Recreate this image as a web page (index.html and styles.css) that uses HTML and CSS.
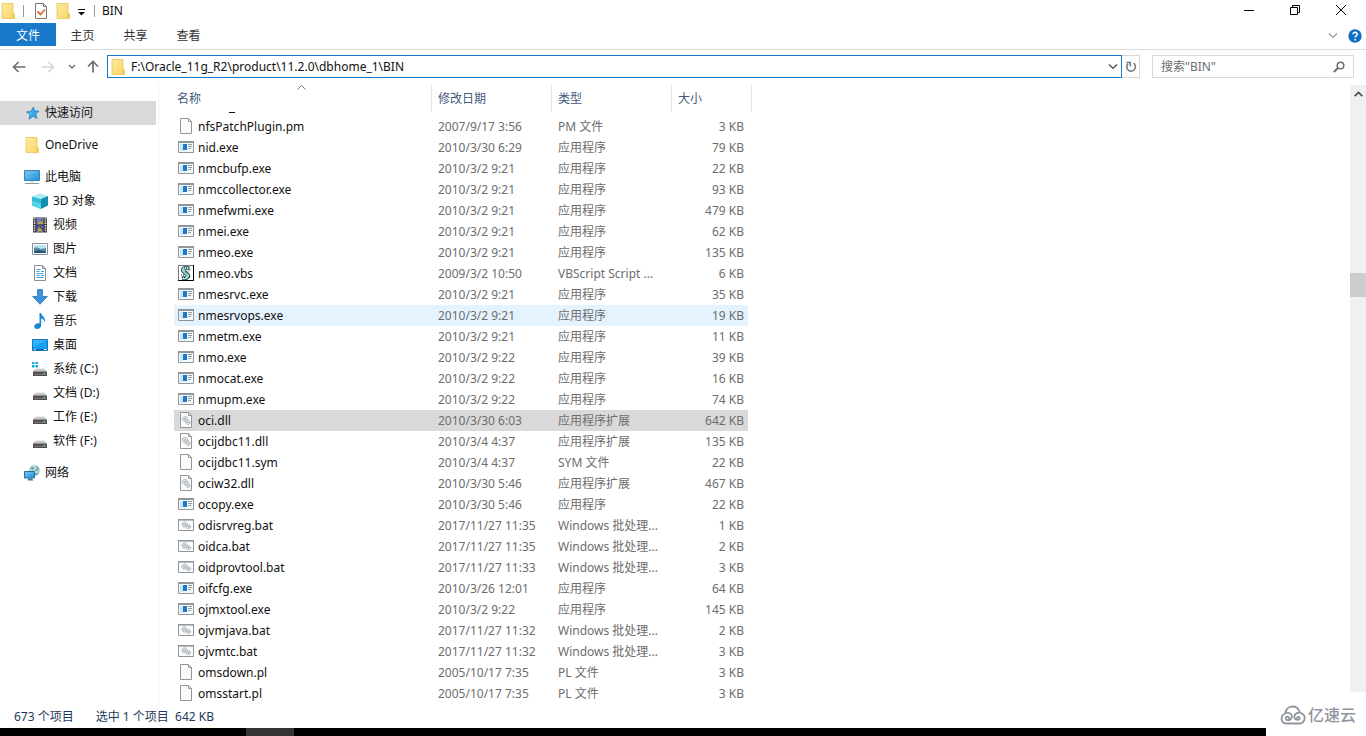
FILE: index.html
```html
<!DOCTYPE html>
<html lang="zh-CN">
<head>
<meta charset="utf-8">
<title>BIN</title>
<link rel="stylesheet" href="styles.css">
</head>
<body>
<svg class="defs" aria-hidden="true">
  <defs>
    <linearGradient id="gold" x1="0" y1="0" x2="1" y2="1"><stop offset="0" stop-color="#ffeb9c"/><stop offset="1" stop-color="#f8d568"/></linearGradient>
    <linearGradient id="screen" x1="0" y1="0" x2="1" y2="1"><stop offset="0" stop-color="#7cc8f2"/><stop offset="1" stop-color="#1f8fdc"/></linearGradient>
    <linearGradient id="drv" x1="0" y1="0" x2="0" y2="1"><stop offset="0" stop-color="#dcdcdc"/><stop offset="1" stop-color="#b4b4b4"/></linearGradient>
  </defs>
  <symbol id="folder" viewBox="0 0 16 16"><path d="M2 .5h11v9.500l1.500 1v4.500H2z" fill="url(#gold)" stroke="#e6c25c" stroke-width=".8"/><path d="M12 10v5.500h2.500V11l-1.500-.5V10z" fill="#f0cc5e"/></symbol>
  <symbol id="file" viewBox="0 0 16 16"><path d="M2.500.5h8l3 3v12h-11z" fill="#fbfbfb" stroke="#969696"/><path d="M10.500.5v3h3" fill="none" stroke="#969696"/></symbol>
  <symbol id="exe" viewBox="0 0 16 16"><path d="M.5 2.500h15v11H.5z" fill="#f4f9fc" stroke="#8f979c"/><path d="M0 2h16v2H0z" fill="#8f979c"/><path d="M2 5h3v7H2z" fill="#cfe5f3"/><path d="M5 5h4v6H5z" fill="#1979ca"/><path d="M10 5.500h4M10 7.500h4M10 9.500h3" stroke="#929ca3"/></symbol>
  <symbol id="dll" viewBox="0 0 16 16"><path d="M2.500.5h8l3 3v12h-11z" fill="#fbfbfb" stroke="#969696"/><path d="M10.500.5v3h3" fill="none" stroke="#969696"/><g fill="#eef3f6" stroke="#8e99a1" stroke-width=".9"><circle cx="7" cy="7" r="2.600" stroke-dasharray="1.500 .4"/><circle cx="10" cy="10.500" r="2" stroke-dasharray="1.300 .4"/><circle cx="7" cy="7" r="1" stroke-width=".7"/><circle cx="10" cy="10.500" r=".6" stroke-width=".6"/></g></symbol>
  <symbol id="bat" viewBox="0 0 16 16"><path d="M.5 2.500h15v11H.5z" fill="#fafcfd" stroke="#8f979c"/><path d="M0 2h16v1.600H0z" fill="#8f979c"/><g fill="#eaf1f5" stroke="#8795a0" stroke-width=".8"><circle cx="6.500" cy="7.500" r="2.600" stroke-dasharray="1.500 .4"/><circle cx="10.500" cy="9.700" r="2" stroke-dasharray="1.300 .4"/><circle cx="6.500" cy="7.500" r="1"/><circle cx="10.500" cy="9.700" r=".6"/></g></symbol>
  <symbol id="vbs" viewBox="0 0 16 16"><path d="M.5.5h15v15H.5z" fill="#fff" stroke="#777"/><path d="M0 15.500h15.500V0" fill="none" stroke="#000"/><path d="M11.500 3H7.500C5 3 4.500 5 6 6.500l3 2.500c1.500 1.500.5 3.500-1 4H4" fill="none" stroke="#111" stroke-width="4.200"/><path d="M11.500 3H7.500C5 3 4.500 5 6 6.500l3 2.500c1.500 1.500.5 3.500-1 4H4" fill="none" stroke="#8fded8" stroke-width="2.800"/><path d="M6 3h5M7 6.500l3 2.500M4 12.500h4M10.500 6l2-1.500M11 12.500l2-1M3 10h3" stroke="#123" stroke-dasharray="1 1"/></symbol>
  <symbol id="star" viewBox="0 0 16 16"><path d="M9.300 2l1.300 3.900 4.400.1-3.300 3 1.300 4.500L9 11.300l-4 2.900 1-4.700L2.500 7l4.600-.6z" fill="#3aa5e8" stroke="#2583c2" stroke-width=".8"/><path d="M9 3.800L8.200 7.500l-4 .2 3 2z" fill="#79c8f4"/></symbol>
  <symbol id="pc" viewBox="0 0 16 16"><path d="M.5 1.500h15v10H.5z" fill="url(#screen)" stroke="#3b82ad"/><path d="M6 12h4v1.500H6z" fill="#cfdde5"/><path d="M1 14.500h14" stroke="#8799a4"/></symbol>
  <symbol id="cube" viewBox="0 0 16 16"><path d="M0 3.500L8 .5l8 2.500-7 3z" fill="#a6ecf2"/><path d="M0 3.500L9 6v10L0 12.500z" fill="#31bfd8"/><path d="M9 6l7-3v9.500L9 16z" fill="#128cb0"/><path d="M0 8l9 2.500V16L0 12.500z" fill="#58d5e5"/></symbol>
  <symbol id="film" viewBox="0 0 16 16"><path d="M1 .5h14v15H1z" fill="#393939"/><path d="M2.500 1v14M13.500 1v14" stroke="#f0f0f0" stroke-width="1.500" stroke-dasharray="1.300 1"/><path d="M4.500 1h7v6.500h-7z" fill="#7376c5"/><path d="M4.500 8.500h7V15h-7z" fill="#5558a7"/><path d="M5 7l4-4 2 1v3zM5 14.500l2-4 3-1v5z" fill="#b1a84c"/><path d="M9 3l1 1.500M8 10l2 2" stroke="#222"/></symbol>
  <symbol id="photo" viewBox="0 0 16 16"><path d="M.5 2.500h15v11H.5z" fill="#fff" stroke="#899299"/><path d="M2 4h12v8H2z" fill="#bde0f3"/><path d="M2 7c3-1 5 0 7 1l5-1v5H2z" fill="#598ba4"/><path d="M2 10.500l4-1.500 8 1.500V12H2z" fill="#265876"/></symbol>
  <symbol id="doc" viewBox="0 0 16 16"><path d="M2.500.5h8l3 3v12h-11z" fill="#fff" stroke="#83919b"/><path d="M10.500.5v3h3" fill="none" stroke="#83919b"/><path d="M4.500 4.500h4M4.500 6.500h3M9 6.500h3M4.500 8.500h7M4.500 10.500h3M9 10.500h3M4.500 12.500h7" stroke="#42a0d4"/></symbol>
  <symbol id="down" viewBox="0 0 16 16"><path d="M5.500.5h5v7h4.800L8 15.300.7 7.500h4.800z" fill="#3c94dc" stroke="#2673b8" stroke-width=".8"/></symbol>
  <symbol id="note" viewBox="0 0 16 16"><path d="M7.500 0h1.700c.3 3.500 4.800 4 3.800 9.500-.7-2.500-2-3.500-3.800-4V12c0 2.500-2 4-4 4S2 14.800 2.200 13.200c.2-2 2.800-3.500 5.300-2.900z" fill="#1588d4"/></symbol>
  <symbol id="desk" viewBox="0 0 16 16"><path d="M.5 2.500h15v11H.5z" fill="#13a0f5" stroke="#1679bd"/><path d="M1 12.500h14" stroke="#0a5da0"/><path d="M2 12.500h1.500M12 12.500h2.500" stroke="#fff"/><path d="M1 3h14L1 10z" fill="#35b0fa"/></symbol>
  <symbol id="drive" viewBox="0 0 16 16"><path d="M3.500 7.500h9l2.500 3H1z" fill="url(#drv)"/><path d="M1 10.500h14V15H1z" fill="#515151"/><path d="M2 13.500h11" stroke="#777"/><path d="M11.500 12h2v1h-2z" fill="#4eff58"/></symbol>
  <symbol id="sysdrive" viewBox="0 0 16 16"><use href="#drive"/><path d="M0 1h2.500v2H0zM3.500 1H6v2H3.500zM0 4h2.500v2.500H0zM3.500 4H6v2.500H3.500z" fill="#18a8d8"/></symbol>
  <symbol id="net" viewBox="0 0 16 16"><circle cx="10.500" cy="5.500" r="5.200" fill="#78acc3"/><path d="M8 1c3 0 5 2 3 3s-1 2 1 3 3-1 3.500-2M6 4l3 3" fill="none" stroke="#c7e5cb" stroke-width="1.500"/><path d="M.5 6.500h10v6.500H.5z" fill="url(#screen)" stroke="#23729f"/><path d="M4 13.500h4l1.500 2h-6z" fill="#437d9b"/></symbol>
</svg>

<div class="window">
  <header class="titlebar">
    <svg class="icon"><use href="#folder"/></svg>
    <span class="rule"></span>
    <button class="quick" aria-label="属性"><svg class="icon" viewBox="0 0 16 16"><path d="M2.500.5h8l3 3v12h-11z" fill="#fff" stroke="#777"/><path d="M10.500.5v3h3" fill="none" stroke="#777"/><path d="M4.500 8.500l3 3 4.500-5" fill="none" stroke="#dd6a3c" stroke-width="1.800"/></svg></button>
    <button class="quick" aria-label="新建文件夹"><svg class="icon"><use href="#folder"/></svg></button>
    <button class="quick caret" aria-label="自定义快速访问工具栏"><svg width="7" height="7" viewBox="0 0 7 7"><path d="M0 .5h7" stroke="#111"/><path d="M0 3h7L3.500 6.500z" fill="#111"/></svg></button>
    <span class="rule"></span>
    <h1 class="title">BIN</h1>
    <div class="controls">
      <button aria-label="最小化"><svg width="12" height="12" viewBox="0 0 12 12"><path d="M1 6.500h10" stroke="#000"/></svg></button>
      <button aria-label="还原"><svg width="12" height="12" viewBox="0 0 12 12"><path d="M1.500 3.500h7v7h-7zM3.500 3.500v-2h7v7h-2" fill="none" stroke="#000"/></svg></button>
      <button aria-label="关闭"><svg width="12" height="12" viewBox="0 0 12 12"><path d="M1 1l10 10M11 1L1 11" stroke="#000"/></svg></button>
    </div>
  </header>

  <nav class="tabs">
    <button class="tab active">文件</button>
    <button class="tab">主页</button>
    <button class="tab">共享</button>
    <button class="tab">查看</button>
    <div class="tabtools">
      <button aria-label="展开功能区"><svg width="10" height="6" viewBox="0 0 10 6"><path d="M1 .5l4 4 4-4" fill="none" stroke="#999" stroke-width="1.200"/></svg></button>
      <button aria-label="帮助"><svg width="14" height="14" viewBox="0 0 14 14"><circle cx="7" cy="7" r="6.700" fill="#0f6fc6"/><path d="M5 5.300c0-2.800 4.300-2.500 4.200 0C9.200 6.800 7.200 7 7.200 8.500M7.200 10v1.600" fill="none" stroke="#fff" stroke-width="1.600"/></svg></button>
    </div>
  </nav>

  <div class="navrow">
    <div class="navbtns">
      <button aria-label="后退"><svg width="14" height="12" viewBox="0 0 14 12"><path d="M13.500 6H1.500M6.500 1l-5 5 5 5" fill="none" stroke="#6e6e6e" stroke-width="1.600"/></svg></button>
      <button aria-label="前进"><svg width="14" height="12" viewBox="0 0 14 12"><path d="M.5 6h12M7.500 1l5 5-5 5" fill="none" stroke="#d4d4d4" stroke-width="1.600"/></svg></button>
      <button aria-label="最近浏览的位置"><svg width="8" height="6" viewBox="0 0 8 6"><path d="M1 1l3 3 3-3" fill="none" stroke="#777" stroke-width="1.500"/></svg></button>
      <button aria-label="上移"><svg width="12" height="13" viewBox="0 0 12 13"><path d="M6 12.500V1.500M1 6.500l5-5 5 5" fill="none" stroke="#6e6e6e" stroke-width="1.700"/></svg></button>
    </div>
    <div class="address">
      <svg class="icon"><use href="#folder"/></svg>
      <input type="text" aria-label="地址" value="F:\Oracle_11g_R2\product\11.2.0\dbhome_1\BIN">
      <button aria-label="以前的位置"><svg width="10" height="6" viewBox="0 0 10 6"><path d="M1 .5l4 4 4-4" fill="none" stroke="#444" stroke-width="1.200"/></svg></button>
    </div>
    <button class="refresh" aria-label="刷新"><svg width="12" height="14" viewBox="0 0 12 14"><path d="M8.500 3.200a4.300 4.300 0 1 1-5.500.6M1.500 2.500h3.800v4" fill="none" stroke="#737b80" stroke-width="1.600"/></svg></button>
    <div class="search">
      <input type="text" aria-label="搜索" placeholder="搜索&quot;BIN&quot;">
      <svg width="12" height="12" viewBox="0 0 12 12"><circle cx="7.500" cy="4.500" r="3.300" fill="none" stroke="#6c6c6c" stroke-width="1.500"/><path d="M5 7L.8 11" stroke="#6c6c6c" stroke-width="2"/></svg>
    </div>
  </div>

  <main class="body">
    <aside class="sidebar">
      <ul>
        <li><a href="#" class="current"><svg class="icon"><use href="#star"/></svg>快速访问</a></li>
      </ul>
      <ul>
        <li><a href="#"><svg class="icon"><use href="#folder"/></svg>OneDrive</a></li>
      </ul>
      <ul>
        <li><a href="#"><svg class="icon"><use href="#pc"/></svg>此电脑</a></li>
        <li><a href="#" class="child"><svg class="icon"><use href="#cube"/></svg>3D 对象</a></li>
        <li><a href="#" class="child"><svg class="icon"><use href="#film"/></svg>视频</a></li>
        <li><a href="#" class="child"><svg class="icon"><use href="#photo"/></svg>图片</a></li>
        <li><a href="#" class="child"><svg class="icon"><use href="#doc"/></svg>文档</a></li>
        <li><a href="#" class="child"><svg class="icon"><use href="#down"/></svg>下载</a></li>
        <li><a href="#" class="child"><svg class="icon"><use href="#note"/></svg>音乐</a></li>
        <li><a href="#" class="child"><svg class="icon"><use href="#desk"/></svg>桌面</a></li>
        <li><a href="#" class="child"><svg class="icon"><use href="#sysdrive"/></svg>系统 (C:)</a></li>
        <li><a href="#" class="child"><svg class="icon"><use href="#drive"/></svg>文档 (D:)</a></li>
        <li><a href="#" class="child"><svg class="icon"><use href="#drive"/></svg>工作 (E:)</a></li>
        <li><a href="#" class="child"><svg class="icon"><use href="#drive"/></svg>软件 (F:)</a></li>
      </ul>
      <ul>
        <li><a href="#"><svg class="icon"><use href="#net"/></svg>网络</a></li>
      </ul>
    </aside>

    <section class="content">
      <table class="files">
        <colgroup><col class="c-name"><col class="c-date"><col class="c-type"><col class="c-size"></colgroup>
        <thead>
          <tr><th>名称<svg class="sort" width="9" height="5" viewBox="0 0 9 5"><path d="M.5 4.500l4-4 4 4" fill="none" stroke="#777"/></svg></th><th>修改日期</th><th>类型</th><th>大小</th></tr>
        </thead>
        <tbody>
          <tr class="cut"><td colspan="4"><span></span></td></tr>
          <tr><td><svg class="icon"><use href="#file"/></svg>nfsPatchPlugin.pm</td><td>2007/9/17 3:56</td><td>PM 文件</td><td>3 KB</td></tr>
          <tr><td><svg class="icon"><use href="#exe"/></svg>nid.exe</td><td>2010/3/30 6:29</td><td>应用程序</td><td>79 KB</td></tr>
          <tr><td><svg class="icon"><use href="#exe"/></svg>nmcbufp.exe</td><td>2010/3/2 9:21</td><td>应用程序</td><td>22 KB</td></tr>
          <tr><td><svg class="icon"><use href="#exe"/></svg>nmccollector.exe</td><td>2010/3/2 9:21</td><td>应用程序</td><td>93 KB</td></tr>
          <tr><td><svg class="icon"><use href="#exe"/></svg>nmefwmi.exe</td><td>2010/3/2 9:21</td><td>应用程序</td><td>479 KB</td></tr>
          <tr><td><svg class="icon"><use href="#exe"/></svg>nmei.exe</td><td>2010/3/2 9:21</td><td>应用程序</td><td>62 KB</td></tr>
          <tr><td><svg class="icon"><use href="#exe"/></svg>nmeo.exe</td><td>2010/3/2 9:21</td><td>应用程序</td><td>135 KB</td></tr>
          <tr><td><svg class="icon"><use href="#vbs"/></svg>nmeo.vbs</td><td>2009/3/2 10:50</td><td>VBScript Script ...</td><td>6 KB</td></tr>
          <tr><td><svg class="icon"><use href="#exe"/></svg>nmesrvc.exe</td><td>2010/3/2 9:21</td><td>应用程序</td><td>35 KB</td></tr>
          <tr class="hover"><td><svg class="icon"><use href="#exe"/></svg>nmesrvops.exe</td><td>2010/3/2 9:21</td><td>应用程序</td><td>19 KB</td></tr>
          <tr><td><svg class="icon"><use href="#exe"/></svg>nmetm.exe</td><td>2010/3/2 9:21</td><td>应用程序</td><td>11 KB</td></tr>
          <tr><td><svg class="icon"><use href="#exe"/></svg>nmo.exe</td><td>2010/3/2 9:22</td><td>应用程序</td><td>39 KB</td></tr>
          <tr><td><svg class="icon"><use href="#exe"/></svg>nmocat.exe</td><td>2010/3/2 9:22</td><td>应用程序</td><td>16 KB</td></tr>
          <tr><td><svg class="icon"><use href="#exe"/></svg>nmupm.exe</td><td>2010/3/2 9:22</td><td>应用程序</td><td>74 KB</td></tr>
          <tr class="selected"><td><svg class="icon"><use href="#dll"/></svg>oci.dll</td><td>2010/3/30 6:03</td><td>应用程序扩展</td><td>642 KB</td></tr>
          <tr><td><svg class="icon"><use href="#dll"/></svg>ocijdbc11.dll</td><td>2010/3/4 4:37</td><td>应用程序扩展</td><td>135 KB</td></tr>
          <tr><td><svg class="icon"><use href="#file"/></svg>ocijdbc11.sym</td><td>2010/3/4 4:37</td><td>SYM 文件</td><td>22 KB</td></tr>
          <tr><td><svg class="icon"><use href="#dll"/></svg>ociw32.dll</td><td>2010/3/30 5:46</td><td>应用程序扩展</td><td>467 KB</td></tr>
          <tr><td><svg class="icon"><use href="#exe"/></svg>ocopy.exe</td><td>2010/3/30 5:46</td><td>应用程序</td><td>22 KB</td></tr>
          <tr><td><svg class="icon"><use href="#bat"/></svg>odisrvreg.bat</td><td>2017/11/27 11:35</td><td>Windows 批处理...</td><td>1 KB</td></tr>
          <tr><td><svg class="icon"><use href="#bat"/></svg>oidca.bat</td><td>2017/11/27 11:35</td><td>Windows 批处理...</td><td>2 KB</td></tr>
          <tr><td><svg class="icon"><use href="#bat"/></svg>oidprovtool.bat</td><td>2017/11/27 11:33</td><td>Windows 批处理...</td><td>3 KB</td></tr>
          <tr><td><svg class="icon"><use href="#exe"/></svg>oifcfg.exe</td><td>2010/3/26 12:01</td><td>应用程序</td><td>64 KB</td></tr>
          <tr><td><svg class="icon"><use href="#exe"/></svg>ojmxtool.exe</td><td>2010/3/2 9:22</td><td>应用程序</td><td>145 KB</td></tr>
          <tr><td><svg class="icon"><use href="#bat"/></svg>ojvmjava.bat</td><td>2017/11/27 11:32</td><td>Windows 批处理...</td><td>2 KB</td></tr>
          <tr><td><svg class="icon"><use href="#bat"/></svg>ojvmtc.bat</td><td>2017/11/27 11:32</td><td>Windows 批处理...</td><td>3 KB</td></tr>
          <tr><td><svg class="icon"><use href="#file"/></svg>omsdown.pl</td><td>2005/10/17 7:35</td><td>PL 文件</td><td>3 KB</td></tr>
          <tr><td><svg class="icon"><use href="#file"/></svg>omsstart.pl</td><td>2005/10/17 7:35</td><td>PL 文件</td><td>3 KB</td></tr>
        </tbody>
      </table>
    </section>

    <div class="scrollbar">
      <button aria-label="向上滚动"><svg width="9" height="6" viewBox="0 0 9 6"><path d="M.7 5.200l3.800-3.800 3.800 3.800" fill="none" stroke="#505050" stroke-width="1.800"/></svg></button>
      <div class="track"><div class="thumb"></div></div>
    </div>
  </main>

  <footer class="bottom">
    <div class="left">
      <div class="status"><span>673 个项目</span><span>选中 1 个项目&nbsp; 642 KB</span></div>
      <div class="taskbar"><div class="task"></div></div>
    </div>
    <div class="brand">
      <svg width="26" height="20" viewBox="0 0 26 20"><g fill="none" stroke="#8f949d" stroke-width="1.800" stroke-linecap="round"><path d="M5.500 7.500C6 4 9 1.500 12.500 1.500c3.500 0 6 2 7 5.200"/><path d="M9 13.500c.3-2-2.700-2.600-3.200-.6-.4 2.300 3 3.200 5 1.300C13.500 11 10.500 7 6.500 8 0 9.500-.2 18.500 6.500 18.500h12.300c6.200 0 7.700-7.500 3.200-10-4-2.200-8.500.5-7.500 4.200.8 2.800 5 2.800 5.200.6.200-1.800-2.300-2-2.700-.2"/></g></svg>
      <span>亿速云</span>
    </div>
  </footer>
</div>
</body>
</html>
```
FILE: styles.css
```css
* { box-sizing: border-box; }
body {
  margin: 0;
  background: #fff;
  color: #111;
  font: 12px/16px "Noto Sans", "Noto Sans CJK SC", sans-serif;
}
button, input { font: inherit; color: inherit; border: 0; padding: 0; background: none; }
button { display: flex; align-items: center; justify-content: center; }
ul { list-style: none; margin: 0; padding: 0; }
a { color: inherit; text-decoration: none; }
svg { display: block; flex: none; }
.defs { position: absolute; width: 0; height: 0; }
.icon { width: 16px; height: 16px; }
.window { display: flex; flex-direction: column; min-height: 100vh; }

.titlebar { display: flex; align-items: center; height: 23px; padding-bottom: 1px; }
.rule { width: 1px; height: 12px; margin: 0 7px; background: #999; }
.quick { margin-left: 2px; margin-right: 4px; }
.caret { width: 12px; margin: 2px 0 0; }
.title { margin: 0; font-size: 12px; font-weight: 400; }
.controls { display: flex; margin-left: auto; margin-right: 2px; }
.controls button { width: 46px; height: 22px; padding-bottom: 2px; }

.tabs { display: flex; height: 27px; padding-bottom: 3px; border-bottom: 1px solid #dadbdc; }
.tab { width: 53px; padding-top: 2px; color: #333; }
.tab.active { width: 56px; background: #1979ca; color: #fff; }
.tabtools { display: flex; align-items: center; gap: 10px; margin-left: auto; padding: 2px 4px 0 0; }

.navrow { display: flex; align-items: stretch; padding: 5px 12px 6px 12px; }
.navbtns { display: flex; gap: 15px; width: 95px; }
.navbtns button:nth-child(n+3) { margin-left: -2px; }
.navbtns button:last-child { margin-left: -4px; }
.address { display: flex; align-items: center; flex: 1; height: 23px; padding: 0 3px 0 2px; border: 1px solid #1979ca; }
.address input { flex: 1; min-width: 0; margin-left: 5px; outline: 0; }
.refresh { width: 18px; border: 1px solid #d9d9d9; border-left: 0; }
.search { display: flex; align-items: center; width: 202px; margin-left: 12px; padding: 0 8px; border: 1px solid #d9d9d9; }
.search input { flex: 1; min-width: 0; outline: 0; }
.search input::placeholder { color: #6d6d6d; opacity: 1; }

.body { display: flex; flex: 1; }
.sidebar { width: 159px; padding: 17px 2px 0 0; border-right: 1px solid #f3f3f3; }
.sidebar ul { margin-bottom: 8px; }
.sidebar a { display: flex; align-items: center; gap: 5px; height: 24px; padding-left: 24px; }
.sidebar a.child { padding-left: 32px; }
.sidebar .current { background: #d9d9d9; }

.content { flex: 1; min-width: 0; padding: 1px 0 0 15px; }
.files { width: 578px; table-layout: fixed; border-collapse: separate; border-spacing: 0; }
.c-name { width: 258px; }
.c-date, .c-type { width: 120px; }
.c-size { width: 80px; }
.files th { position: relative; height: 27px; padding: 0 0 0 6px; border-right: 1px solid #e5e5e5; color: #43597a; font-weight: 400; text-align: left; }
.files th:first-child { padding-left: 3px; }
.sort { position: absolute; left: calc(50% - 6px); top: 0; }
.files td { height: 21px; padding: 0 0 0 6px; color: #6d6d6d; white-space: nowrap; }
.files td:first-child { display: flex; align-items: center; gap: 4px; padding-left: 4px; color: #111; }
.files td:last-child { padding: 0 4px 0 0; border-right: 4px solid transparent; background-clip: padding-box; text-align: right; }
.files td .icon { margin-bottom: 2px; }
.files .hover td { background-color: #e5f3ff; }
.files .selected td { background-color: #d9d9d9; }
.files .cut td:first-child { display: table-cell; height: 4px; padding: 0 0 0 55px; border: 0; line-height: 0; vertical-align: top; }
.cut span { display: block; width: 6px; height: 1px; background: #111; }

.scrollbar { display: flex; flex-direction: column; width: 16px; margin: 1px 0 13px; background: #f0f0f0; }
.scrollbar button { height: 17px; }
.track { flex: 1; padding-top: 171px; }
.thumb { height: 24px; background: #cdcdcd; }

.bottom { display: flex; height: 31px; }
.left { flex: 1; }
.status { display: flex; align-items: center; gap: 22px; height: 23px; padding-left: 14px; color: #1e395b; }
.taskbar { height: 8px; padding-left: 246px; background: #000; }
.task { width: 48px; height: 8px; background: #333; }
.brand { display: flex; align-items: flex-start; gap: 2px; width: 100px; padding-left: 14px; color: #8f949d; font-size: 16px; font-weight: 500; line-height: 20px; }
```
